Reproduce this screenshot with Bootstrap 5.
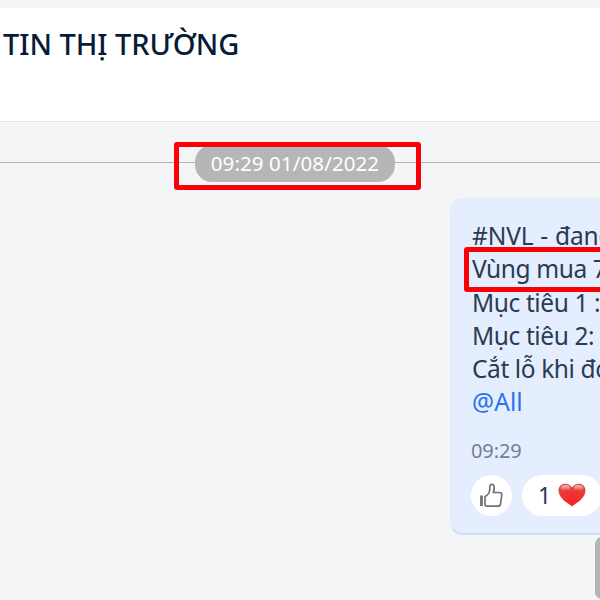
<!DOCTYPE html>
<html lang="vi">

<head>
    <meta charset="UTF-8">
    <meta name="viewport" content="width=device-width, initial-scale=1">
    <title>TIN THỊ TRƯỜNG</title>
    <link href="https://cdn.jsdelivr.net/npm/bootstrap@5.3.3/dist/css/bootstrap.min.css" rel="stylesheet">
    <style>
        body {
            height: 600px;
            background: #f4f5f7;
            color: #2b3b50;
            font-family: "Noto Sans", "Open Sans", sans-serif;
        }

        .chat-header {
            height: 114px;
            margin-top: 8px;
            padding: 15px 0 0 3px;
            border-bottom: 1px solid #e3e5e8;
        }

        .chat-title {
            font-size: 29px;
            line-height: 42px;
            font-weight: 500;
            letter-spacing: -.05px;
            color: #071c36;
        }

        .date-row {
            height: 37px;
            margin-top: 23px;
        }

        .date-line {
            height: 1px;
            margin-bottom: 3px;
            background: #b2b4b7;
        }

        .date-line-start {
            width: 195px;
        }

        .date-pill {
            width: 200px;
            height: 37px;
            border-radius: 17px;
            background: #b5b6b8;
            font-size: 20.5px;
            letter-spacing: .1px;
        }

        .mark-box {
            border: 5px solid #fb0007;
            border-radius: 3px;
        }

        .mark-date {
            left: 174px;
            top: -3px;
            width: 247px;
            height: 48px;
        }

        .mark-buy {
            left: -8px;
            top: 28px;
            width: 180px;
            height: 45px;
        }

        .bubble {
            height: 337px;
            margin: 16px -20px 0 450px;
            padding: 20px 0 0 20px;
            border: 1px solid #e3ebfb;
            border-bottom: 2px solid #cfdcf3;
            border-radius: 13px;
            background: #e5eeff;
        }

        .message {
            margin-left: 1px;
            font-size: 24.5px;
            line-height: 33.3px;
            letter-spacing: -.4px;
        }

        .ticker-line {
            letter-spacing: -.1px;
            word-spacing: .5px;
        }

        .mention {
            color: #2871ec;
            letter-spacing: .1px;
        }

        .sent-at {
            margin-top: 17px;
            font-size: 20px;
            line-height: 30px;
            letter-spacing: -.1px;
            color: #727f94;
        }

        .reactions {
            margin-top: 9px;
            gap: 10px;
        }

        .like-btn {
            width: 41px;
            height: 41px;
        }

        .heart-pill {
            width: 80px;
            height: 41px;
            padding-left: 16px;
            gap: 7px;
            font-size: 23px;
        }

        .scroll-btn {
            left: 595px;
            top: 537px;
            width: 44px;
            height: 62px;
            border-radius: 7px;
            background: #b3b4b6;
        }
    </style>
</head>

<body class="overflow-hidden position-relative">
    <div class="d-flex flex-column h-100 overflow-hidden">
        <header class="chat-header bg-white flex-shrink-0">
            <h1 class="chat-title m-0 text-nowrap">TIN THỊ TRƯỜNG</h1>
        </header>

        <div class="date-row position-relative d-flex align-items-center flex-shrink-0">
            <div class="date-line date-line-start"></div>
            <div class="date-pill d-flex align-items-center justify-content-center text-white text-nowrap">09:29 01/08/2022</div>
            <div class="date-line flex-grow-1"></div>
            <div class="mark-box mark-date position-absolute"></div>
        </div>

        <div class="bubble flex-shrink-0">
            <div class="message position-relative text-nowrap">
                <div class="ticker-line">#NVL - đang</div>
                <div>Vùng mua 7</div>
                <div>Mục tiêu 1 :</div>
                <div>Mục tiêu 2:</div>
                <div>Cắt lỗ khi đó</div>
                <div class="mention">@All</div>
                <div class="mark-box mark-buy position-absolute"></div>
            </div>
            <div class="sent-at">09:29</div>
            <div class="reactions d-flex">
                <div class="like-btn bg-white rounded-circle d-flex align-items-center justify-content-center flex-shrink-0">
                    <svg width="25" height="27" viewBox="0 0 25 27" fill="none" stroke="#707276" stroke-width="1.7" stroke-linejoin="round">
                        <path d="M6 23V14.5C8.5 13.5 10.5 10.5 10.8 7.5V4.2C11 1.5 14.8 1.6 15.2 4.8C15.4 7 14.9 8.7 14.3 10.5H20.5C22.4 10.5 23 11.8 22.8 13.2L21.5 22C21.2 23.5 20.3 24.2 19 24.2H8.5C7.2 24.2 6.5 23.8 6 23Z" />
                        <path d="M2.5 13.5V24" stroke-width="2.8" />
                    </svg>
                </div>
                <div class="heart-pill bg-white rounded-pill d-flex align-items-center flex-shrink-0">
                    <span>1</span>
                    <svg width="28" height="24" viewBox="0 0 28 24">
                        <defs>
                            <radialGradient id="heartFill" cx=".5" cy=".75" r=".75">
                                <stop offset="0" stop-color="#f5222c" />
                                <stop offset=".6" stop-color="#ed3838" />
                                <stop offset="1" stop-color="#d94b40" />
                            </radialGradient>
                            <linearGradient id="heartShine" x2="0" y2="1">
                                <stop offset="0" stop-color="#fff" stop-opacity=".65" />
                                <stop offset="1" stop-color="#fff" stop-opacity="0" />
                            </linearGradient>
                        </defs>
                        <path fill="url(#heartFill)" d="M14 23.5C10.5 20.5 .5 15.5 .5 7.5C.5 3.5 3.5 .8 7.2 .8C10.2 .8 12.7 2.2 14 4.5C15.3 2.2 17.8 .8 20.8 .8C24.5 .8 27.5 3.5 27.5 7.5C27.5 15.5 17.5 20.5 14 23.5Z" />
                        <ellipse cx="7.5" cy="5" rx="4.8" ry="3" fill="url(#heartShine)" />
                        <ellipse cx="20.5" cy="5" rx="4.8" ry="3" fill="url(#heartShine)" />
                    </svg>
                </div>
            </div>
        </div>
    </div>
    <div class="scroll-btn position-absolute"></div>
    <script src="https://cdn.jsdelivr.net/npm/bootstrap@5.3.3/dist/js/bootstrap.bundle.min.js"></script>
</body>

</html>
